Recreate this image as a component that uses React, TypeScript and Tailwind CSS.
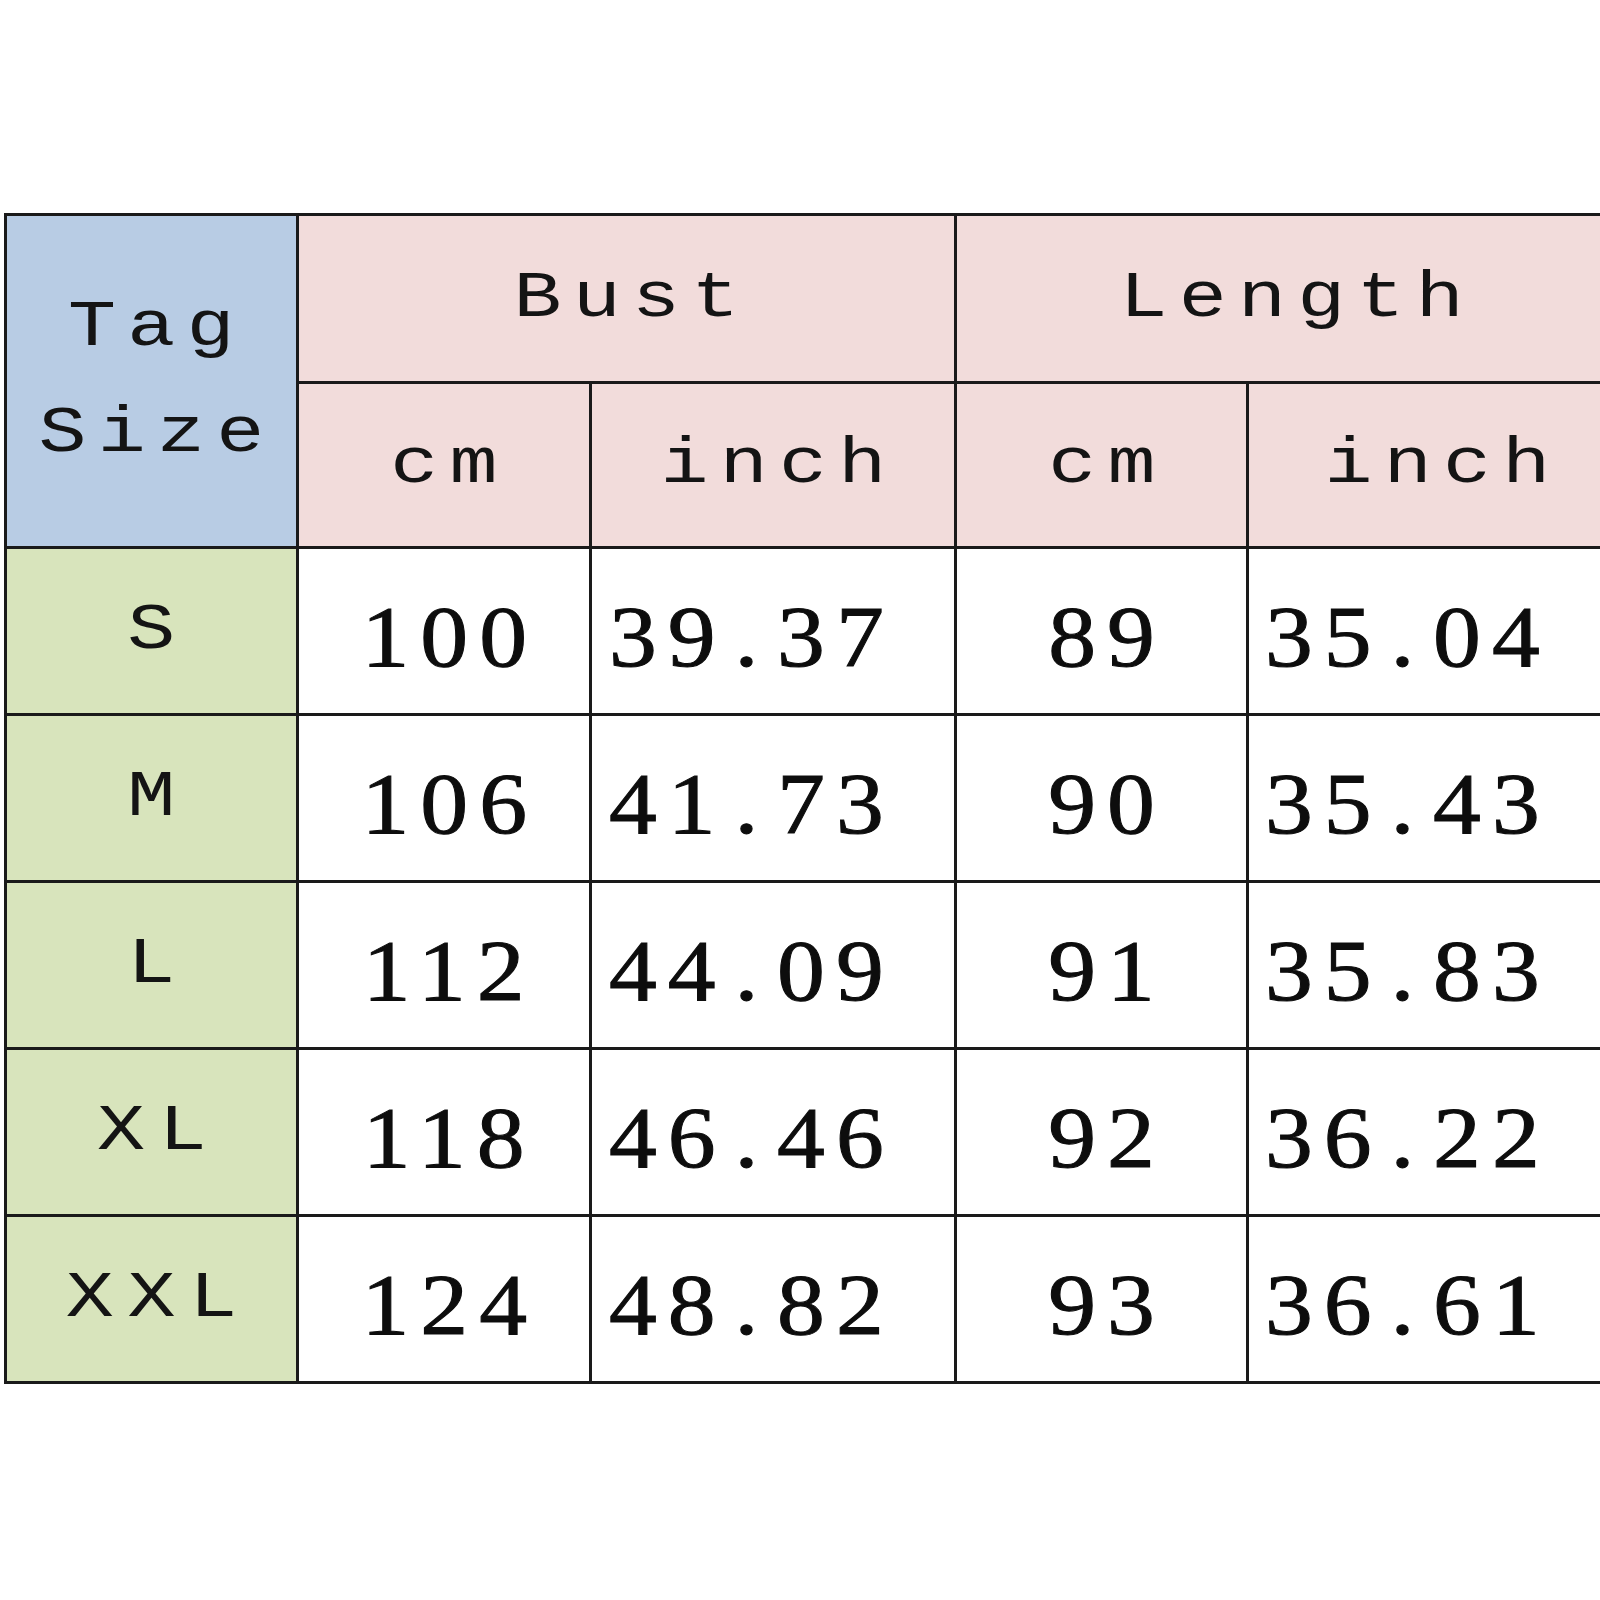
import React from 'react';

const rows = [
  { tag: 'S', bustCm: '100', bustIn: '39.37', lenCm: '89', lenIn: '35.04' },
  { tag: 'M', bustCm: '106', bustIn: '41.73', lenCm: '90', lenIn: '35.43' },
  { tag: 'L', bustCm: '112', bustIn: '44.09', lenCm: '91', lenIn: '35.83' },
  { tag: 'XL', bustCm: '118', bustIn: '46.46', lenCm: '92', lenIn: '36.22' },
  { tag: 'XXL', bustCm: '124', bustIn: '48.82', lenCm: '93', lenIn: '36.61' },
];

const mono =
  "inline-block scale-x-[1.25] font-['Liberation_Mono','Courier_New',monospace] text-[64px] tracking-[9px] pl-[9px] text-[#141414]";
const label =
  "inline-block scale-x-[1.25] font-['Liberation_Mono','Courier_New',monospace] text-[64px] tracking-[11px] pl-[11px] text-[#141414]";
const serif =
  "inline-block scale-x-[1.1] font-['Liberation_Serif','Times_New_Roman',serif] text-[87px] tracking-[10px] text-[#0d0d0d] [-webkit-text-stroke:1px_#0d0d0d]";
const cell = 'border-[3px] border-[#1a1a1a] p-0';

// numbers; the decimal point sits in a wide gap
const Num: React.FC<{ value: string; left?: boolean }> = ({ value, left }) => {
  const [a, b] = value.split('.');
  return (
    <span className={`${serif} ${left ? 'origin-left' : 'pl-[10px]'}`}>
      {a}
      {b !== undefined && (
        <>
          <span className="mx-[7px]">.</span>
          {b}
        </>
      )}
    </span>
  );
};

const App: React.FC = () => {
  return (
    <div className="w-[1600px] h-[1600px] bg-white overflow-hidden">
      <div className="w-[1700px] pt-[213px] pl-[4px]">
        <table className="border-collapse table-fixed w-[1622px]">
          <colgroup>
            <col className="w-[292px]" />
            <col className="w-[293px]" />
            <col className="w-[365px]" />
            <col className="w-[292px]" />
            <col className="w-[380px]" />
          </colgroup>
          <thead>
            <tr className="h-[168px]">
              <th rowSpan={2} className={`${cell} bg-[#b8cce4] font-normal text-center`}>
                <div className={`${mono} leading-[106px]`}>
                  Tag<br />Size
                </div>
              </th>
              <th colSpan={2} className={`${cell} bg-[#f2dcdb] font-normal text-center`}>
                <span className={mono}>Bust</span>
              </th>
              <th colSpan={2} className={`${cell} bg-[#f2dcdb] font-normal text-center`}>
                <span className={mono}>Length</span>
              </th>
            </tr>
            <tr className="h-[165px]">
              <th className={`${cell} bg-[#f2dcdb] font-normal text-center`}>
                <span className={mono}>cm</span>
              </th>
              <th className={`${cell} bg-[#f2dcdb] font-normal text-center`}>
                <span className={mono}>inch</span>
              </th>
              <th className={`${cell} bg-[#f2dcdb] font-normal text-center`}>
                <span className={mono}>cm</span>
              </th>
              <th className={`${cell} bg-[#f2dcdb] font-normal text-center`}>
                <span className={mono}>inch</span>
              </th>
            </tr>
          </thead>
          <tbody>
            {rows.map((r) => (
              <tr key={r.tag} className="h-[167px]">
                <td className={`${cell} bg-[#d8e4bc] text-center`}>
                  <span className={label}>{r.tag}</span>
                </td>
                <td className={`${cell} bg-white text-center pt-[12px]`}>
                  <Num value={r.bustCm} />
                </td>
                <td className={`${cell} bg-white text-left pl-[17px] pt-[12px]`}>
                  <Num value={r.bustIn} left />
                </td>
                <td className={`${cell} bg-white text-center pt-[12px]`}>
                  <Num value={r.lenCm} />
                </td>
                <td className={`${cell} bg-white text-left pl-[16px] pt-[12px]`}>
                  <Num value={r.lenIn} left />
                </td>
              </tr>
            ))}
          </tbody>
        </table>
      </div>
    </div>
  );
};

export default App;
